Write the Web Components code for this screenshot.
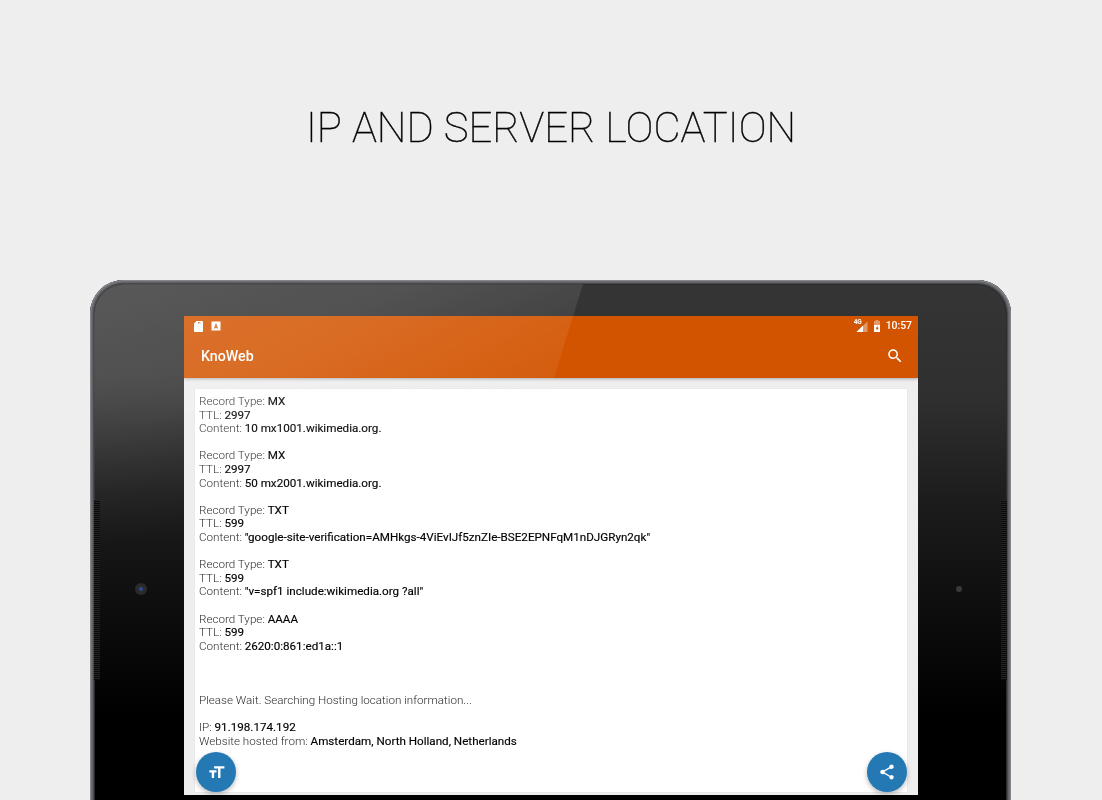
<!DOCTYPE html>
<html>
<head>
<meta charset="utf-8">
<title>KnoWeb</title>
<style>
    html, body { margin: 0; height: 800px; overflow: hidden; background: #eeeeee; font-family: Roboto, "Liberation Sans", sans-serif; }
</style>
</head>
<body>
<store-page>
    <span slot="title">IP AND SERVER LOCATION</span>
    <tablet-frame>
        <app-bar title="KnoWeb"></app-bar>
        <result-card>
            <dns-record type="MX" ttl="2997" content="10 mx1001.wikimedia.org."></dns-record>
            <dns-record type="MX" ttl="2997" content="50 mx2001.wikimedia.org."></dns-record>
            <dns-record type="TXT" ttl="599" content="&quot;google-site-verification=AMHkgs-4ViEvIJf5znZIe-BSE2EPNFqM1nDJGRyn2qk&quot;"></dns-record>
            <dns-record type="TXT" ttl="599" content="&quot;v=spf1 include:wikimedia.org ?all&quot;"></dns-record>
            <dns-record type="AAAA" ttl="599" content="2620:0:861:ed1a::1"></dns-record>
            <hosting-info ip="91.198.174.192" place="Amsterdam, North Holland, Netherlands"></hosting-info>
        </result-card>
        <fab-button slot="fabs" icon="text"></fab-button>
        <fab-button slot="fabs" icon="share"></fab-button>
    </tablet-frame>
</store-page>

<script>
class StorePage extends HTMLElement {
    static #template = `
        <style>
            :host { display: flex; flex-direction: column; align-items: flex-start; height: 800px; overflow: hidden; will-change: transform; }
            h1 {
                flex: none; align-self: center; margin: 0; height: 280px; box-sizing: border-box; padding-top: 98px;
                font: 100 41.8px/60px Roboto, "Liberation Sans", sans-serif;
                color: #000; -webkit-text-stroke: .4px #000;
            }
        </style>
        <h1><slot name="title"></slot></h1>
        <slot></slot>`;

    constructor() {
        super();
        this.attachShadow({ mode: "open" }).innerHTML = StorePage.#template;
    }
}

class TabletFrame extends HTMLElement {
    static #template = `
        <style>
            :host {
                display: block; position: relative; flex: none; box-sizing: border-box;
                width: 921px; height: 560px; margin-left: 90px; padding: 36px 93px 0 94px;
                border-radius: 34px 34px 0 0;
                background: linear-gradient(to bottom, #353535 0, #2f2f2f 120px, #1c1c1c 220px, #0c0c0c 340px, #000 440px);
                box-shadow: inset 0 0 0 1px #85878b, inset 0 0 0 2px #6c6e72, inset 0 0 0 3px #606266, inset 0 0 0 4px #48494c, inset 0 0 0 5px #2c2c2e;
            }
            .screen {
                position: relative; display: flex; flex-direction: column;
                height: 479px; background: #eeeeee; overflow: hidden;
            }
            .gloss {
                position: absolute; inset: 4px auto auto 4px; width: 489px; height: 300px;
                border-radius: 30px 0 0 0; pointer-events: none;
                clip-path: polygon(0 0, 100% 0, 81% 100%, 0 100%);
                background: linear-gradient(152deg, rgba(255,255,255,.18) 0, rgba(255,255,255,.15) 30%, rgba(255,255,255,.07) 55%, rgba(255,255,255,.02) 78%);
                -webkit-mask-image: linear-gradient(to bottom, #000 30%, transparent 90%);
                mask-image: linear-gradient(to bottom, #000 30%, transparent 90%);
            }
            .fabs {
                position: absolute; left: 12px; right: 11px; top: 436px;
                display: flex; justify-content: space-between;
            }
            .grill {
                position: absolute; top: 220px; width: 6px; height: 180px;
                background: repeating-linear-gradient(0deg, #090909 0 1px, #242424 1px 2px);
            }
            .grill.left { left: 4px; }
            .grill.right { right: 4px; }
            .cam { position: absolute; border-radius: 50%; }
            .cam.left { left: 45px; top: 303px; width: 12px; height: 12px; background: radial-gradient(circle, #2b4a8e 0 1.5px, #2a2a2a 2.5px); }
            .cam.right { right: 49px; top: 306px; width: 6px; height: 6px; background: #3a3a3a; }
        </style>
        <div class="screen">
            <slot></slot>
            <div class="fabs"><slot name="fabs"></slot></div>
        </div>
        <div class="gloss"></div>
        <div class="grill left"></div>
        <div class="grill right"></div>
        <div class="cam left"></div>
        <div class="cam right"></div>`;

    constructor() {
        super();
        this.attachShadow({ mode: "open" }).innerHTML = TabletFrame.#template;
    }
}

class AppBar extends HTMLElement {
    constructor() {
        super();
        this.attachShadow({ mode: "open" }).innerHTML = `
        <style>
            :host {
                display: block; flex: none; height: 62px; background: #d35400; color: #fff;
                box-shadow: 0 1px 3px rgba(0,0,0,.3); position: relative;
            }
            .status { display: flex; align-items: center; height: 20px; padding: 0 6px 0 8px; }
            .status svg { display: block; fill: #fff; }
            .note { margin-left: 7px; }
            .spacer { flex: 1; }
            .net { position: relative; width: 14px; height: 12px; margin-right: 5px; }
            .net b { position: absolute; left: 0; top: -1px; font: 700 6.5px/7px Roboto, sans-serif; }
            .time { font: 500 10.4px/20px Roboto, "Liberation Sans", sans-serif; margin-left: 5px; }
            .bar { display: flex; align-items: center; height: 40px; padding: 0 14px 0 17px; }
            .title { flex: 1; font: 500 14.2px/40px Roboto, "Liberation Sans", sans-serif; }
        </style>
        <div class="status">
            <svg width="12" height="12" viewBox="0 0 12 12"><path d="M4.5 1H10a1 1 0 0 1 1 1v9a1 1 0 0 1-1 1H3a1 1 0 0 1-1-1V3.5zM6 2v1.6h.8V2zm1.5 0v1.6h.8V2z" fill-rule="evenodd"/></svg>
            <svg class="note" width="10" height="10" viewBox="0 0 10 10"><path fill-rule="evenodd" d="M.5.5h9v9h-9zM5 2.1 2.9 7.6h1.2l.3-.9h1.2l.3.9h1.2zM5 4.3l.35 1.4h-.7z"/></svg>
            <span class="spacer"></span>
            <span class="net">
                <b>4G</b>
                <svg width="14" height="12" viewBox="0 0 14 12"><path d="M13.5 1.5V12H2.5z" fill-opacity=".4"/><path d="M9 5.5V12H2.5z"/></svg>
            </span>
            <svg width="8" height="12" viewBox="0 0 8 12"><path d="M2.6 0h2.8v1H7v4H1V1h1.6z" fill-opacity=".4"/><path fill-rule="evenodd" d="M1 5h6v7H1zM4.6 5.7 2.6 8.8h1.2v2l2-3.1H4.6z"/></svg>
            <span class="time">10:57</span>
        </div>
        <div class="bar">
            <span class="title">${this.getAttribute("title")}</span>
            <svg width="18" height="18" viewBox="0 0 24 24" fill="#fff"><path d="M15.5 14h-.79l-.28-.27C15.41 12.59 16 11.11 16 9.5 16 5.91 13.09 3 9.5 3S3 5.91 3 9.5 5.91 16 9.5 16c1.61 0 3.09-.59 4.23-1.57l.27.28v.79l5 4.99L20.49 19l-4.99-5zm-6 0C7.01 14 5 11.99 5 9.5S7.01 5 9.5 5 14 7.01 14 9.5 11.99 14 9.5 14z"/></svg>
        </div>`;
    }
}

class ResultCard extends HTMLElement {
    static #template = `
        <style>
            :host {
                display: flex; flex-direction: column; flex: 1; box-sizing: border-box;
                margin: 11px 11px 3px; padding: 6px 4px 0;
                background: #fff; box-shadow: 0 0 1px rgba(0,0,0,.12);
                font: 300 11.65px/13.6px Roboto, "Liberation Sans", sans-serif; color: #2b2b2b;
            }
        </style>
        <slot></slot>`;

    constructor() {
        super();
        this.attachShadow({ mode: "open" }).innerHTML = ResultCard.#template;
    }
}

class DnsRecord extends HTMLElement {
    constructor() {
        super();
        const [type, ttl, content] = ["type", "ttl", "content"].map(a => this.getAttribute(a));
        this.attachShadow({ mode: "open" }).innerHTML = `
        <style>
            :host { display: block; margin-bottom: 13.6px; }
            b { font-weight: 400; color: #000; -webkit-text-stroke: .15px #000; }
            div { white-space: nowrap; }
        </style>
        <div>Record Type: <b>${type}</b></div>
        <div>TTL: <b>${ttl}</b></div>
        <div>Content: <b>${content}</b></div>`;
    }
}

class HostingInfo extends HTMLElement {
    constructor() {
        super();
        this.attachShadow({ mode: "open" }).innerHTML = `
        <style>
            :host { display: block; margin-top: 27.2px; }
            b { font-weight: 400; color: #000; -webkit-text-stroke: .15px #000; }
            div { white-space: nowrap; }
            .wait { margin-bottom: 13.6px; }
        </style>
        <div class="wait">Please Wait. Searching Hosting location information...</div>
        <div>IP: <b>${this.getAttribute("ip")}</b></div>
        <div>Website hosted from: <b>${this.getAttribute("place")}</b></div>`;
    }
}

class FabButton extends HTMLElement {
    static #icons = {
        text: `<svg width="19" height="19" viewBox="0 0 24 24" fill="#fff"><path d="M9 4v3h5v12h3V7h5V4H9zm-6 8h3v7h3v-7h3V9H3v3z"/></svg>`,
        share: `<svg width="18" height="18" viewBox="0 0 24 24" fill="#fff"><path d="M18 16.08c-.76 0-1.44.3-1.96.77L8.91 12.7c.05-.23.09-.46.09-.7s-.04-.47-.09-.7l7.05-4.11c.54.5 1.25.81 2.04.81 1.66 0 3-1.34 3-3s-1.34-3-3-3-3 1.34-3 3c0 .24.04.47.09.7L8.04 9.81C7.5 9.31 6.79 9 6 9c-1.66 0-3 1.34-3 3s1.34 3 3 3c.79 0 1.5-.31 2.04-.81l7.12 4.16c-.05.21-.08.43-.08.65 0 1.61 1.31 2.92 2.92 2.92 1.61 0 2.92-1.31 2.92-2.92s-1.31-2.92-2.92-2.92z"/></svg>`
    };

    constructor() {
        super();
        this.attachShadow({ mode: "open" }).innerHTML = `
        <style>
            :host {
                display: flex; align-items: center; justify-content: center;
                width: 40px; height: 40px; border-radius: 50%; background: #2479b5;
                box-shadow: 0 2px 5px rgba(0,0,0,.28);
            }
        </style>
        ${FabButton.#icons[this.getAttribute("icon")]}`;
    }
}

customElements.define("store-page", StorePage);
customElements.define("tablet-frame", TabletFrame);
customElements.define("app-bar", AppBar);
customElements.define("result-card", ResultCard);
customElements.define("dns-record", DnsRecord);
customElements.define("hosting-info", HostingInfo);
customElements.define("fab-button", FabButton);
</script>
</body>
</html>
